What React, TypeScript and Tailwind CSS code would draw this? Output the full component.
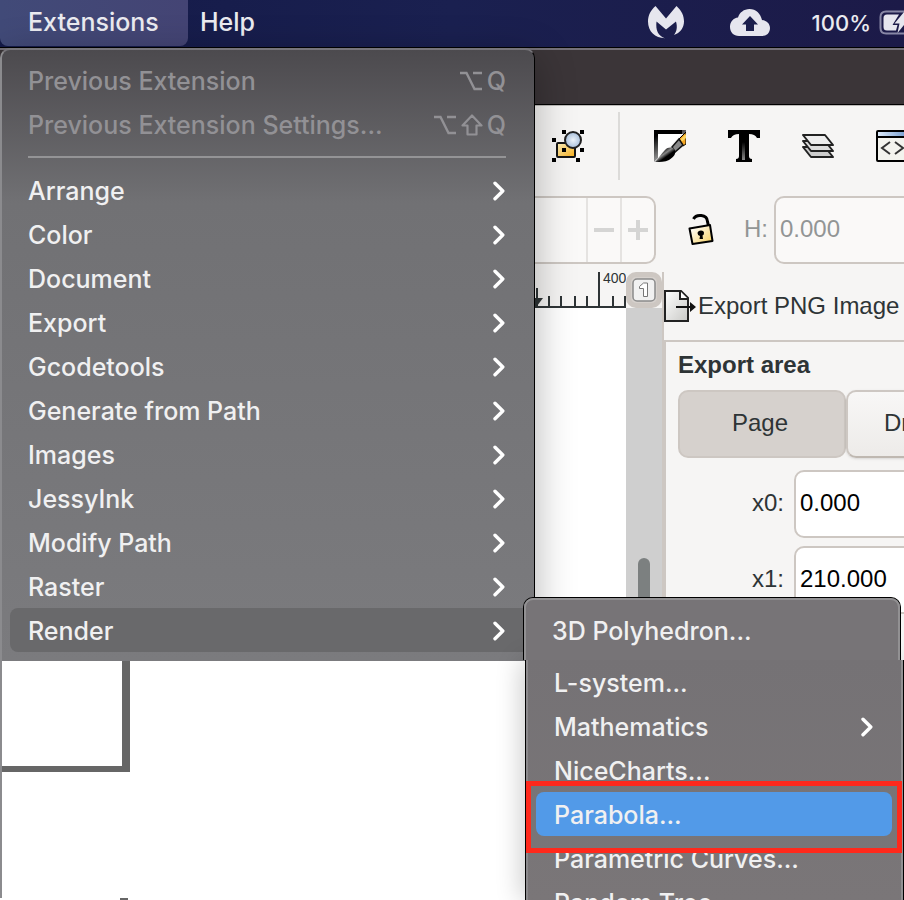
import React from "react";

const MENU_ITEMS = [
  "Arrange",
  "Color",
  "Document",
  "Export",
  "Gcodetools",
  "Generate from Path",
  "Images",
  "JessyInk",
  "Modify Path",
  "Raster",
  "Render",
];

function Chevron() {
  return (
    <svg viewBox="0 0 12 20" className="h-5 w-3 shrink-0" fill="none" stroke="#fff" strokeWidth="3.4" strokeLinecap="round" strokeLinejoin="round" aria-hidden="true">
      <path d="M2 2.2 L9.8 10 L2 17.8" />
    </svg>
  );
}

function OptionKey() {
  return (
    <svg viewBox="0 0 24 20" className="h-5 w-6" fill="none" stroke="currentColor" strokeWidth="2.4" aria-hidden="true">
      <path d="M1 2 H7.5 L15.5 18 H23 M14 2 H23" />
    </svg>
  );
}

function ShiftKey() {
  return (
    <svg viewBox="0 0 22 22" className="h-[22px] w-[22px]" fill="none" stroke="currentColor" strokeWidth="2.2" strokeLinejoin="round" aria-hidden="true">
      <path d="M11 1.5 L20.5 11.5 H15.5 V20.5 H6.5 V11.5 H1.5 Z" />
    </svg>
  );
}

function MenuBar() {
  return (
    <header className="flex h-12 shrink-0 items-center border-b border-black bg-linear-to-r from-[#141a48] via-[#1a2050] to-[#1c1a48] pb-0.5 font-[Inter,sans-serif] text-[25px] font-medium text-[#ebebf0]">
      <button className="h-[46px] w-[188px] shrink-0 rounded-b-lg bg-linear-to-r from-[#414a78] to-[#444474] pl-7 text-left leading-none">Extensions</button>
      <button className="ml-3 shrink-0 leading-none">Help</button>
      <div className="ml-auto flex shrink-0 items-center text-[22px]">
        <svg viewBox="0 0 36 33" className="h-[33px] w-9" fill="#e6e6ee" aria-label="Malwarebytes">
          <path d="M7.5 0 L18 12.5 L28.5 0 C34 5 36 10 36 15.5 C36 22 32 27 26 29 C29 25 29.5 21 28 15.5 L18 23.5 L8.5 15.5 C7.5 24 10 30 17 32.2 C7 32 0 25.5 0 15.5 C0 9 3 4 7.5 0 Z" />
        </svg>
        <svg viewBox="0 0 40 27" className="ml-[46px] h-[27px] w-10" aria-label="Upload">
          <path fill="#e6e6ee" d="M9 27 C3.5 27 0 23 0 18 C0 12.5 3.5 9 8 8.5 C9.5 3.5 14 0 19.5 0 C26 0 30.5 4.5 32 11 C37 11.5 40 15 40 19 C40 24 36.5 27 32 27 Z" />
          <path fill="#1b1e4c" d="M20 7 L28 15.5 H24 V22 H16 V15.5 H12 Z" />
        </svg>
        <span className="ml-[42px] leading-none">100%</span>
        <svg viewBox="0 0 25 25" className="ml-2 h-[25px] w-[25px]" aria-label="Battery charging">
          <path d="M25 1.5 H7 Q1.5 1.5 1.5 7 V18 Q1.5 23.5 7 23.5 H25" fill="none" stroke="#8887a5" strokeWidth="2" />
          <path fill="#e6e6ee" d="M20 4.5 H8 Q4.5 4.5 4.5 8 V17 Q4.5 20.5 8 20.5 H17 L18.5 15 H13.5 Z M25 2 L15.5 13.5 H20.5 L18.5 23 L25 15 Z" />
        </svg>
      </div>
    </header>
  );
}

function Toolbar() {
  return (
    <div className="flex h-[91px] shrink-0 items-start border-t border-[#bdbbb9] bg-[#f6f5f4] pt-1.5 pl-[551px]">
      <button className="mt-4 h-9 w-9 shrink-0" aria-label="Zoom selection">
        <svg viewBox="0 0 36 36" className="h-9 w-9">
          <defs>
            <linearGradient id="box" x1="0" y1="0" x2="1" y2="1">
              <stop offset="0" stopColor="#fff3c0" />
              <stop offset="1" stopColor="#f5ac18" />
            </linearGradient>
            <radialGradient id="lens">
              <stop offset="0" stopColor="#eff5fb" />
              <stop offset="1" stopColor="#a9c0dc" />
            </radialGradient>
          </defs>
          <rect x="6" y="15" width="18" height="14" rx="1" fill="url(#box)" stroke="#151515" strokeWidth="2" />
          <circle cx="22" cy="12" r="8" fill="url(#lens)" stroke="#222" strokeWidth="2" />
          <path d="M11 2h4v4h-4z M29 2h4v4h-4z M1 10h4v4h-4z M11 20h4v4h-4z M29 20h4v4h-4z M1 30h4v4h-4z M25 30h4v4h-4z" />
        </svg>
      </button>
      <div className="ml-[31px] h-[68px] w-0.5 shrink-0 bg-[#dcdbd9]" />
      <button className="mt-[18px] ml-[34px] h-8 w-8 shrink-0" aria-label="Fill and stroke">
        <svg viewBox="0 0 32 32" className="h-8 w-8">
          <defs>
            <linearGradient id="frame" x1="0" y1="0" x2="0.7" y2="1">
              <stop offset="0.15" stopColor="#000" />
              <stop offset="0.85" stopColor="#c8c8c8" />
            </linearGradient>
            <linearGradient id="bristle" x1="0" y1="0" x2="1" y2="1">
              <stop offset="0.3" stopColor="#222" />
              <stop offset="0.45" stopColor="#888" />
              <stop offset="0.6" stopColor="#000" />
            </linearGradient>
          </defs>
          <path fill="url(#frame)" d="M0 0H32V4H4V28L0 32Z" />
          <path fill="#000" d="M0 0H28V4H0Z" />
          <path fill="#fff" d="M4 4H28L4 28Z" />
          <path fill="#f5a623" stroke="#000" strokeWidth="1" d="M25 9L32 2V14L29 16Z" />
          <path fill="#ffd75e" d="M26.5 9.5L32 4V8L28 11.5Z" />
          <path fill="#888" stroke="#111" strokeWidth="1.5" d="M18 17L25 9L29 15L21 22Z" />
          <path fill="url(#bristle)" d="M1 32C5 28 7 24 11 20C14 17 18 17 20 19C23 23 20 27 15 30C11 32 6 32 1 32Z" />
        </svg>
      </button>
      <button className="mt-[18px] ml-[42px] h-8 w-8 shrink-0" aria-label="Text and font">
        <svg viewBox="0 0 32 32" className="h-8 w-8">
          <defs>
            <linearGradient id="stem" x1="0" y1="0" x2="0" y2="1">
              <stop offset="0" stopColor="#000" />
              <stop offset="1" stopColor="#888" />
            </linearGradient>
          </defs>
          <path d="M0 0H32V8H29Q27 4 21 4V26Q21 29 24 29V32H8V29Q11 29 11 26V4Q5 4 3 8H0Z" />
          <path fill="url(#stem)" d="M14 12H17V30H14Z" />
        </svg>
      </button>
      <button className="mt-[18px] ml-[42px] h-8 w-8 shrink-0" aria-label="Layers">
        <svg viewBox="0 0 32 32" className="h-8 w-8" stroke="#222" strokeWidth="2" strokeLinejoin="round">
          <path fill="#ccc" d="M1 17H23L31 27H9Z" />
          <path fill="#ddd" d="M1 11H23L31 21H9Z" />
          <path fill="#eee" d="M1 5H23L31 15H9Z" />
        </svg>
      </button>
      <button className="mt-[18px] ml-[42px] h-8 w-8 shrink-0" aria-label="XML editor">
        <svg viewBox="0 0 32 32" className="h-8 w-8" fill="none">
          <defs>
            <linearGradient id="xml">
              <stop offset="0" stopColor="#dceafa" />
              <stop offset="1" stopColor="#6f98cc" />
            </linearGradient>
          </defs>
          <rect x="1" y="1" width="34" height="30" rx="1" fill="#f3f3ee" stroke="#000" strokeWidth="2" />
          <path fill="url(#xml)" d="M2 2H32V6H2Z" />
          <path stroke="#000" strokeWidth="2" d="M1 7H32" />
          <path stroke="#333" strokeWidth="2" d="M14 12L6 18L14 24M19 12L27 18L19 24" />
        </svg>
      </button>
    </div>
  );
}

function ToolControls() {
  return (
    <div className="flex h-[76px] shrink-0 items-start bg-[#f6f5f4] text-2xl text-[#929595]">
      <div className="flex h-[68px] w-[656px] shrink-0 justify-end rounded-r-[10px] border-2 border-[#cdc7c2] bg-[#faf9f8]">
        <button aria-label="Decrease" className="flex w-[34px] items-center justify-center border-l-2 border-[#e5e3e1]">
          <span className="h-1 w-5 bg-[#d5d5d4]" />
        </button>
        <button aria-label="Increase" className="flex w-[34px] items-center justify-center border-l-2 border-[#e5e3e1]">
          <svg viewBox="0 0 20 20" className="h-5 w-5" fill="#d5d5d4" aria-hidden="true">
            <path d="M8 0h4v8h8v4h-8v8H8v-8H0V8h8z" />
          </svg>
        </button>
      </div>
      <button aria-label="Lock width and height" className="mt-[17px] ml-8 h-8 w-[26px] shrink-0">
        <svg viewBox="0 0 26 32" className="h-8 w-[26px]" fill="none">
          <defs>
            <linearGradient id="lock" x1="0" y1="0" x2="1" y2="1">
              <stop offset="0.1" stopColor="#fff" />
              <stop offset="1" stopColor="#f7cf5a" />
            </linearGradient>
          </defs>
          <path stroke="#000" strokeWidth="3" d="M5.5 6C8 1 19 1 19.5 8.5L20.5 13" />
          <path fill="url(#lock)" stroke="#000" strokeWidth="2" strokeLinejoin="round" d="M1.5 15.5L22 12L24.5 28L4.5 31Z" />
          <path fill="#000" d="M9.5 20Q10 17.5 13 17.5Q16 17.5 16 20Q16 22 14.5 22.5L15 26H11.5L12 23Q9.5 22.5 9.5 20Z" />
        </svg>
      </button>
      <label htmlFor="height" className="ml-[30px] shrink-0 leading-[66px]">H:</label>
      <input id="height" defaultValue="0.000" className="ml-1.5 h-[68px] w-[200px] min-w-0 rounded-l-[10px] border-2 border-r-0 border-[#cdc7c2] bg-[#faf9f8] pb-0.5 pl-1" />
    </div>
  );
}

function Canvas() {
  return (
    <main className="w-[626px] shrink-0 bg-white">
      <div className="flex h-9 items-end justify-end border-b-2 border-[#2e3436] bg-[#f6f5f4]">
        <svg viewBox="0 0 92 34" className="h-[34px] w-[92px] overflow-visible" aria-label="Ruler">
          <path stroke="#2e3436" strokeWidth="2" d="M3 16V34M15 24V34M27 24V34M41 24V34M53 24V34M65 0V34M79 24V34M91 24V34" />
          <path fill="#2e3436" d="M0 26H9L3 34H0Z" />
          <text x="69" y="11" fill="#2e3436" className="font-['Liberation_Sans',sans-serif] text-sm">400</text>
        </svg>
      </div>
    </main>
  );
}

function Scroller() {
  return (
    <div className="flex w-9 shrink-0 flex-col items-center bg-[#cfcfcf]">
      <div className="w-full bg-[#f6f5f4]">
        <button aria-label="Fit page" className="flex h-9 w-full items-center justify-center rounded-[10px] border-[5px] border-[#cdc7c2] bg-[#d6d1cd]">
          <svg viewBox="0 0 24 24" className="h-6 w-6 shrink-0">
            <rect x="1" y="1" width="22" height="22" rx="4" fill="#f1f1f1" stroke="#8b8b8b" strokeWidth="1.5" />
            <path fill="#fff" stroke="#777" d="M7.5 8.5L11.5 5H15.5V18.5H11.5V10.5H7.5Z" />
          </svg>
        </button>
      </div>
      <div className="mt-[250px] h-[200px] w-3 rounded-full bg-[#7c8080]" />
    </div>
  );
}

function ExportPanel() {
  return (
    <aside className="min-w-0 flex-1 overflow-hidden border-l-2 border-[#cdc7c2] bg-[#f6f5f4] text-2xl whitespace-nowrap text-[#2e3436]">
      <h2 className="flex h-[68px] items-center">
        <svg viewBox="0 0 32 32" className="h-8 w-8 shrink-0" aria-hidden="true">
          <defs>
            <linearGradient id="sheet" x1="0" y1="0" x2="1" y2="1">
              <stop offset="0" stopColor="#fff" />
              <stop offset="1" stopColor="#c9c9c6" />
            </linearGradient>
          </defs>
          <path fill="url(#sheet)" stroke="#222" strokeWidth="2" d="M1 1H17L24 8V31H1Z" />
          <path fill="#fff" stroke="#222" strokeWidth="2" d="M16 1V9H24" />
          <path fill="#111" d="M12 16H26V12L32 17L26 22V18H12Z" />
        </svg>
        <span className="ml-0.5">Export PNG Image</span>
      </h2>
      <div className="border-t-2 border-l-2 border-[#cdc7c2] pl-3">
        <h3 className="pt-[7px] leading-8 font-bold">Export area</h3>
        <div className="mt-[9px] flex">
          <button className="h-[68px] w-[168px] shrink-0 rounded-[10px] border-2 border-[#cdc7c2] bg-[#d6d1cd] pr-1 pb-0.5">Page</button>
          <button className="h-[68px] w-[168px] shrink-0 rounded-[10px] border-2 border-[#cdc7c2] border-b-[#bfb8b1] bg-linear-to-b from-[#f8f7f6] to-[#edebe9] pl-9 pb-0.5 text-left shadow-sm">Drawing</button>
        </div>
        <div className="mt-3 flex h-[68px]">
          <label htmlFor="x0" className="w-[106px] shrink-0 text-right leading-[66px]">x0:</label>
          <input id="x0" defaultValue="0.000" className="ml-2.5 w-[240px] shrink-0 rounded-[10px] border-2 border-[#cdc7c2] bg-white pb-0.5 pl-1 text-black" />
        </div>
        <div className="mt-2 flex h-[68px]">
          <label htmlFor="x1" className="w-[106px] shrink-0 text-right leading-[66px]">x1:</label>
          <input id="x1" defaultValue="210.000" className="ml-2.5 w-[240px] shrink-0 rounded-[10px] border-2 border-[#cdc7c2] bg-white pb-0.5 pl-1 text-black" />
        </div>
      </div>
    </aside>
  );
}

function ExtensionsMenu() {
  return (
    <nav aria-label="Extensions" className="absolute top-12 left-0 w-[535px] rounded-t-[10px] border-t-2 border-r border-l-2 border-t-[#77757a] border-r-black border-l-[#8b8b8e] bg-linear-to-b from-[#4c4a4e] via-[#717174] via-25% to-[#7b7b7e] pt-2 pb-2.5 font-[Inter,sans-serif] text-[25px] font-medium text-[#f0f0f1] shadow-[0_10px_40px_rgba(0,0,0,0.3)]">
      <div className="pr-7 pl-[26px] text-[#929195]">
        <button disabled className="flex h-11 w-full items-center justify-between pt-0.5">
          <span className="pt-0.5">Previous Extension</span>
          <span className="flex items-center gap-1">
            <OptionKey />
            <span className="pt-0.5">Q</span>
          </span>
        </button>
        <button disabled className="flex h-11 w-full items-center justify-between pt-0.5">
          <span className="pt-0.5">Previous Extension Settings...</span>
          <span className="flex items-center gap-1">
            <OptionKey />
            <ShiftKey />
            <span className="pt-0.5">Q</span>
          </span>
        </button>
        <hr className="my-2.5 border-t-2 border-[#949496]" />
      </div>
      {MENU_ITEMS.map((item) => (
        <button
          key={item}
          className={
            item === "Render"
              ? "ml-2 flex h-11 w-[calc(100%-8px)] items-center justify-between rounded-lg bg-[#69696b] pt-0.5 pr-[29px] pl-[18px]"
              : "flex h-11 w-full items-center justify-between pt-0.5 pr-[29px] pl-[26px]"
          }
        >
          <span className="pt-0.5">{item}</span>
          <Chevron />
        </button>
      ))}
    </nav>
  );
}

function RenderMenu() {
  return (
    <nav aria-label="Render" className="absolute top-[597px] left-[523px] h-[303px] w-[381px] font-[Inter,sans-serif] text-[25px] font-medium text-[#f0f0f1]">
      <div className="relative z-10 mr-[3px] h-[63px] rounded-t-[10px] border border-b-0 border-black bg-[#777477]">
        <div className="h-full rounded-t-[9px] border-2 border-b-0 border-[#929193] pt-2 pl-[26px]">
          <button className="h-11 pt-1">3D Polyhedron...</button>
        </div>
      </div>
      <div className="ml-0.5 h-60 overflow-hidden border-x border-black shadow-[-4px_0_24px_rgba(0,0,0,0.2)]">
        <div className="flex h-full flex-col border-x-2 border-l-[#8b898c] border-r-[#929193] bg-linear-to-b from-[#757275] to-[#7a7678]">
          <button className="h-11 shrink-0 pt-1 pl-[26px] text-left">L-system...</button>
          <button className="flex h-11 shrink-0 items-center justify-between pt-0.5 pr-7 pl-[26px]">
            <span className="pt-0.5">Mathematics</span>
            <Chevron />
          </button>
          <button className="h-11 shrink-0 pt-1 pl-[26px] text-left">NiceCharts...</button>
          <button className="mr-[9px] ml-2 h-11 shrink-0 rounded-lg bg-[#529ae8] pt-1 pl-[18px] text-left">Parabola...</button>
          <button className="h-11 shrink-0 pt-1 pl-[26px] text-left">Parametric Curves...</button>
          <button className="h-11 shrink-0 pt-1 pl-[26px] text-left">Random Tree...</button>
        </div>
      </div>
    </nav>
  );
}

export default function App() {
  return (
    <div className="relative flex h-screen flex-col overflow-hidden bg-white font-['Liberation_Sans',Arial,sans-serif]">
      <MenuBar />
      <div className="h-[57px] shrink-0 border-t-2 border-b border-t-[#757178] border-b-black bg-[#3b3538]" />
      <Toolbar />
      <ToolControls />
      <div className="flex min-h-0 flex-1">
        <Canvas />
        <Scroller />
        <ExportPanel />
      </div>
      <ExtensionsMenu />
      <div className="absolute top-[661px] left-0 h-[237px] w-[526px] border-l-2 border-[#8b8b8e] bg-white">
        <div className="h-[111px] w-32 border-r-8 border-b-[6px] border-[#666]" />
      </div>
      <div className="absolute bottom-0 left-[120px] h-0.5 w-2 bg-[#666]" />
      <RenderMenu />
      <div className="absolute top-[781px] left-[526px] h-[72px] w-[376px] border-[5px] border-[#ff291c]" />
    </div>
  );
}
